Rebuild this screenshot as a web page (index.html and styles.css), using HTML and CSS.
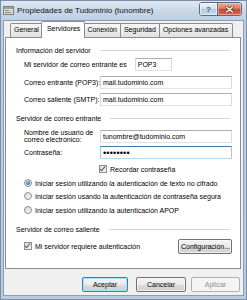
FILE: index.html
```html
<!DOCTYPE html>
<html>
<head>
	<title>Propiedades de Tudominio (tunombre)</title>
	<meta charset="utf-8">
	<link rel="stylesheet" href="styles.css">
</head>
<body>
	<div class="window">
		<div class="titlebar">
			<svg class="app-icon" width="11" height="10" viewBox="0 0 11 10">
				<rect x="0.5" y="1.5" width="10" height="8" fill="#d6d9d6" stroke="#7b8079"/>
				<rect x="1" y="2" width="9" height="2" fill="#9aa69a"/>
				<rect x="2" y="5" width="4" height="1" fill="#8a9389"/>
				<rect x="2" y="7" width="6" height="1" fill="#8a9389"/>
			</svg>
			<span class="title">Propiedades de Tudominio (tunombre)</span>
			<div class="caption-buttons">
				<span class="cap-btn help">?</span>
				<span class="cap-btn close">
					<svg width="9" height="7" viewBox="0 0 9 7">
						<path d="M1.5 1 L7.5 6 M7.5 1 L1.5 6" stroke="#6b2a20" stroke-width="2.6" stroke-linecap="round"/>
						<path d="M1.5 1 L7.5 6 M7.5 1 L1.5 6" stroke="#fff" stroke-width="1.4" stroke-linecap="round"/>
					</svg>
				</span>
			</div>
		</div>
		<div class="client">
			<div class="tabs">
				<span class="tab">General</span>
				<span class="tab active">Servidores</span>
				<span class="tab">Conexión</span>
				<span class="tab">Seguridad</span>
				<span class="tab">Opciones avanzadas</span>
			</div>
			<div class="panel">
				<div class="heading h1"><span>Información del servidor</span><i class="rule"></i></div>
				<div class="row r1">
					<span>Mi servidor de correo entrante es</span>
					<input class="field short" value="POP3" readonly>
				</div>
				<div class="row r2">
					<span class="lbl">Correo entrante (POP3):</span>
					<input class="field" value="mail.tudominio.com" readonly>
				</div>
				<div class="row r3">
					<span class="lbl">Correo saliente (SMTP):</span>
					<input class="field" value="mail.tudominio.com" readonly>
				</div>

				<div class="heading h2"><span>Servidor de correo entrante</span><i class="rule"></i></div>
				<div class="row r4">
					<span class="lbl two-line">Nombre de usuario de<br>correo electrónico:</span>
					<input class="field" value="tunombre@tudominio.com" readonly>
				</div>
				<div class="row r5">
					<span class="lbl">Contraseña:</span>
					<input class="field focused" type="password" value="xxxxxxxx" readonly>
				</div>
				<div class="row r6 indent">
					<span class="check on"></span>
					<span>Recordar contraseña</span>
				</div>
				<div class="row r7">
					<span class="radio on"></span>
					<span>Iniciar sesión utilizando la autenticación de texto no cifrado</span>
				</div>
				<div class="row r8">
					<span class="radio"></span>
					<span>Iniciar sesión usando la autenticación de contraseña segura</span>
				</div>
				<div class="row r9">
					<span class="radio"></span>
					<span>Iniciar sesión utilizando la autenticación APOP</span>
				</div>

				<div class="heading h3"><span>Servidor de correo saliente</span><i class="rule"></i></div>
				<div class="row r10">
					<span class="check on"></span>
					<span>Mi servidor requiere autenticación</span>
					<button class="btn config">Configuración...</button>
				</div>
			</div>
			<div class="actions">
				<button class="btn default ok">Aceptar</button>
				<button class="btn cancel">Cancelar</button>
				<button class="btn apply" disabled>Aplicar</button>
			</div>
		</div>
	</div>
</body>
</html>
```

FILE: styles.css
```css
body, html {
	margin: 0px;
	width: 247px;
	height: 300px;
	overflow: hidden;
	font-family: "Liberation Sans", Arial, sans-serif;
	font-size: 7px;
	color: #000;
}
div {
	box-sizing: border-box;
}
.window {
	width: 247px;
	height: 300px;
	background: linear-gradient(to bottom, #dfe8f2 0px, #c9d8e9 10px, #bccfe4 20px, #b7cbe1 100%);
	border: 1px solid #7d8fa6;
	display: flex;
	flex-direction: column;
}
.titlebar {
	height: 19px;
	display: flex;
	align-items: center;
	padding-left: 2px;
	flex-shrink: 0;
}
.app-icon {
	margin-top: -1px;
}
.title {
	margin-left: 3px;
	font-size: 8px;
	margin-top: -1px;
	color: #111;
}
.caption-buttons {
	margin-left: auto;
	margin-right: 4px;
	align-self: flex-start;
	margin-top: 1px;
	display: flex;
	border: 1px solid #5b6a80;
	border-radius: 3px;
	overflow: hidden;
	height: 14px;
}
.cap-btn {
	display: flex;
	align-items: center;
	justify-content: center;
	height: 12px;
}
.help {
	width: 17px;
	background: linear-gradient(to bottom, #eef3f9 0%, #d6e1ee 45%, #b5c8df 50%, #c8d9ec 100%);
	border-right: 1px solid #5b6a80;
	color: #3b5576;
	font-weight: bold;
	font-size: 8px;
	box-shadow: inset 0 0 0 1px rgba(255,255,255,0.6);
}
.close {
	width: 23px;
	background: linear-gradient(to bottom, #eab0a2 0%, #d87c68 45%, #c4452f 50%, #d86a4f 100%);
	box-shadow: inset 0 0 0 1px rgba(255,210,200,0.5);
}
.client {
	flex: 1;
	margin: 0 2px 3px 2px;
	background: #f0f0f0;
	border: 1px solid #8c9db3;
	padding-top: 0px;
}
.tabs {
	display: flex;
	align-items: flex-end;
	height: 17px;
	margin-left: 6px;
	position: relative;
	z-index: 1;
}
.tab {
	height: 13px;
	line-height: 12px;
	padding: 0 3px;
	border: 1px solid #898c95;
	border-bottom: none;
	border-left: none;
	background: linear-gradient(to bottom, #f6f6f6 0%, #ececec 50%, #e0e0e0 100%);
	margin-bottom: 1px;
	white-space: nowrap;
}
.tab:first-child {
	border-left: 1px solid #898c95;
	border-radius: 2px 0 0 0;
}
.tab:last-child {
	border-radius: 0 2px 0 0;
	padding-right: 4px;
}
.tab.active {
	height: 16px;
	line-height: 13px;
	background: #fff;
	margin: 0 -1px 0 -2px;
	padding: 0 4px 0 5px;
	border-left: 1px solid #898c95;
	border-radius: 2px 2px 0 0;
	position: relative;
	margin-bottom: 0px;
}
.tab.active + .tab {
	border-left: none;
}
.panel {
	margin: -1px 2px 0 1px;
	height: 232px;
	background: #fff;
	border: 1px solid #898c95;
	padding: 0 9px 0 10px;
	display: flex;
	flex-direction: column;
}
.heading {
	display: flex;
	align-items: center;
	height: 12px;
	white-space: nowrap;
}
.rule {
	flex: 1;
	height: 0px;
	border-top: 1px solid #d5d5d5;
	margin-left: 9px;
	margin-right: 1px;
}
.h1 { margin-top: 6px; }
.h2 { margin-top: 6px; }
.h3 { margin-top: 7px; }
.row {
	display: flex;
	align-items: center;
	margin-left: 8px;
	white-space: nowrap;
	height: 13px;
}
.r1 { margin-top: 2px; }
.r2 { margin-top: 5px; }
.r3 { margin-top: 4px; }
.r4 { margin-top: 4px; height: 16px; }
.r5 { margin-top: 2px; }
.r6 { margin-top: 4px; height: 12px; }
.r7 { margin-top: 2px; height: 12px; }
.r8 { margin-top: 1px; height: 12px; }
.r9 { margin-top: 2px; height: 12px; }
.r10 { margin-top: 3px; height: 16px; }
.lbl {
	width: 76px;
	flex-shrink: 0;
}
.two-line {
	line-height: 7.5px;
}
.indent {
	padding-left: 75px;
}
.field {
	flex: 1;
	min-width: 0;
	height: 13px;
	box-sizing: border-box;
	border: 1px solid;
	border-color: #abadb3 #d6d9de #dfe3e8 #d6d9de;
	padding: 0 2px;
	margin: 0 -1px 0 0;
	font: inherit;
	color: #000;
	background: #fff;
	outline: none;
}
.field.short {
	flex: none;
	width: 37px;
	margin-left: 8px;
}
.field.focused {
	border-color: #3d7bad #a4c9e3 #b7d9ed #a4c9e3;
	font-size: 9px;
	letter-spacing: 0.2px;
}
.check, .radio {
	width: 8px;
	height: 8px;
	box-sizing: border-box;
	flex-shrink: 0;
	margin-right: 3px;
	position: relative;
}
.check {
	border: 1px solid #8e8f8f;
	background: linear-gradient(135deg, #dcdcdc 0%, #f4f4f4 100%);
}
.check.on::after {
	content: "";
	position: absolute;
	left: 1px;
	top: -1px;
	width: 2px;
	height: 5px;
	border: solid #4a5f8b;
	border-width: 0 1.5px 1.5px 0;
	transform: rotate(40deg);
}
.radio {
	border: 1px solid #8e8f8f;
	border-radius: 50%;
	background: linear-gradient(135deg, #d8d8d8 0%, #f6f6f6 100%);
}
.radio.on::after {
	content: "";
	position: absolute;
	left: 1px;
	top: 1px;
	width: 4px;
	height: 4px;
	border-radius: 50%;
	background: radial-gradient(circle at 35% 35%, #9fc4ef 0%, #3b6fc1 60%, #1f4a95 100%);
}
.btn {
	font: inherit;
	color: #000;
	height: 15px;
	padding: 0 2px;
	border: 1px solid #707070;
	border-radius: 2px;
	background: linear-gradient(to bottom, #f3f3f3 0%, #ebebeb 50%, #dddddd 51%, #cfcfcf 100%);
	box-shadow: inset 0 0 0 1px rgba(255,255,255,0.7);
	margin: 0;
}
.config {
	margin-left: auto;
	width: 54px;
	margin-right: -1px;
}
.actions {
	display: flex;
	margin-top: 8px;
	padding-left: 78px;
}
.ok {
	width: 46px;
}
.cancel {
	width: 50px;
	margin-left: 8px;
}
.apply {
	width: 49px;
	margin-left: 5px;
}
.default {
	border-color: #3c7fb1;
	box-shadow: inset 0 0 0 1px #a6e0fb;
}
.apply:disabled {
	color: #8d8d8d;
	border-color: #adb2b5;
	background: #f4f4f4;
	box-shadow: none;
}
```
